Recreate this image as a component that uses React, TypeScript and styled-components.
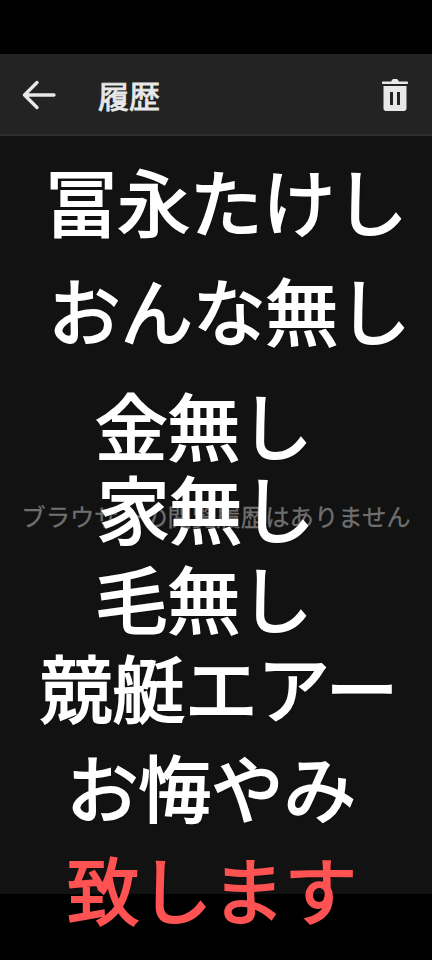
import React from 'react';
import styled, {createGlobalStyle} from 'styled-components';

const GlobalStyle = createGlobalStyle`
  html, body {
    margin: 0;
    padding: 0;
    background: #000;
    font-family: "Noto Sans CJK JP", "Roboto", sans-serif;
  }
`;

interface LyricLine {
  text: string;
  indent: number;
  gap: number;
  accent?: boolean;
}

const LINES: LyricLine[] = [
  {text: '冨永たけし', indent: 45, gap: 0},
  {text: 'おんな無し', indent: 48, gap: 29},
  {text: '金無し', indent: 95, gap: 35},
  {text: '家無し', indent: 97, gap: 3},
  {text: '毛無し', indent: 95, gap: 10},
  {text: '競艇エアー', indent: 40, gap: 9},
  {text: 'お悔やみ', indent: 66, gap: 20},
  {text: '致します', indent: 67, gap: 22, accent: true},
];

export default function App() {
  return (
    <Screen>
      <GlobalStyle />
      <Panel>
        <Toolbar>
          <IconButton aria-label="戻る">
            <svg width="36" height="36" viewBox="0 0 36 36" fill="none">
              <path
                d="M33 18H4M16 5.500 3.500 18 16 30.500"
                stroke="#e8e8e8"
                strokeWidth="3.4"
                strokeLinecap="round"
                strokeLinejoin="round"
              />
            </svg>
          </IconButton>
          <Title>履歴</Title>
          <TrashButton aria-label="削除">
            <svg width="26" height="32" viewBox="0 0 26 32" fill="#e8e8e8">
              <path
                fillRule="evenodd"
                d="M9.500 1.500 11 0h4l1.500 1.500 0 1h8.500c.6 0 1 .4 1 1v.5c0 .6-.4 1-1 1H1c-.6 0-1-.4-1-1v-.5c0-.6.4-1 1-1h8.500zM1.500 7h23v22.500c0 1.400-1.100 2.500-2.500 2.500H4c-1.400 0-2.500-1.100-2.500-2.500zM8 13v13h3V13zm7 0v13h3V13z"
              />
            </svg>
          </TrashButton>
        </Toolbar>
        <Body>
          <EmptyMessage>ブラウザーの閲覧履歴はありません</EmptyMessage>
        </Body>
      </Panel>
      <Lyrics>
        {LINES.map(line => (
          <Lyric key={line.text} $indent={line.indent} $gap={line.gap} $accent={line.accent}>
            {line.text}
          </Lyric>
        ))}
      </Lyrics>
    </Screen>
  );
}

const Screen = styled.div`
  position: relative;
  width: 432px;
  height: 960px;
  padding: 54px 0 66px;
  box-sizing: border-box;
  overflow: hidden;
  background: #000;
`;

const Panel = styled.div`
  display: flex;
  flex-direction: column;
  height: 100%;
  background: #121212;
`;

const Toolbar = styled.div`
  display: flex;
  align-items: center;
  height: 82px;
  padding: 0 24px 0 21px;
  box-sizing: border-box;
  background: #232323;
  border-bottom: 2px solid #2c2c2c;
`;

const IconButton = styled.div`
  display: flex;
  align-items: center;
  width: 36px;
  height: 36px;
  margin-top: 2px;
`;

const Title = styled.div`
  flex: 1;
  margin-left: 41px;
  color: #e8e8e8;
  font-size: 31px;
  font-weight: 400;
  -webkit-text-stroke: 0.9px #e8e8e8;
`;

const TrashButton = styled.div`
  display: flex;
  align-items: center;
  margin-top: 2px;
`;

const Body = styled.div`
  flex: 1;
  display: flex;
  align-items: center;
  justify-content: center;
`;

const EmptyMessage = styled.div`
  color: #6f6f6f;
  font-size: 24.4px;
  white-space: nowrap;
  -webkit-text-stroke: 0.3px #6f6f6f;
`;

const Lyrics = styled.div`
  position: absolute;
  top: 160px;
  left: 0;
  right: 0;
  display: flex;
  flex-direction: column;
`;

const Lyric = styled.div<{$indent: number; $gap: number; $accent?: boolean}>`
  margin-top: ${p => p.$gap}px;
  margin-left: ${p => p.$indent}px;
  color: ${p => (p.$accent ? '#ff5252' : '#fff')};
  font-size: 72.5px;
  font-weight: 400;
  line-height: 80px;
  white-space: nowrap;
  -webkit-text-stroke: 2px ${p => (p.$accent ? '#ff5252' : '#fff')};
  text-shadow: 1px 1px 2px rgba(0, 0, 0, 0.5);
`;
